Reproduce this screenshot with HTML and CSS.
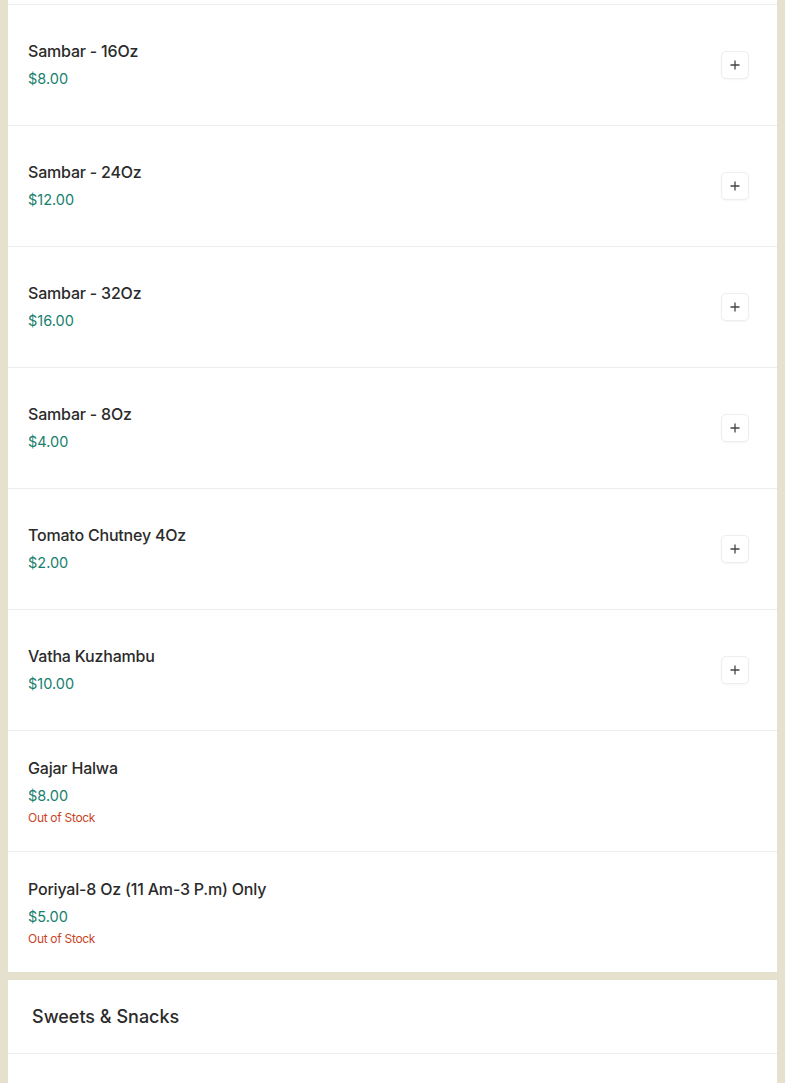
FILE: index.html
```html
<!DOCTYPE html>
<html lang="en">
<head>
  <meta charset="UTF-8">
  <meta name="viewport" content="width=device-width, initial-scale=1.0">
  <title>Menu</title>
  <link rel="stylesheet" href="styles.css">
</head>
<body>

  <div class="menu">

    <!-- Curries & Sides -->
    <section class="panel">
      <div class="item-list">
        <div class="item">
          <div class="item-info">
            <div class="item-name">Sambar - 16Oz</div>
            <div class="item-price">$8.00</div>
          </div>
          <button class="add-btn" aria-label="Add">
            <svg width="12" height="12" viewBox="0 0 12 12"><path d="M6 1.5v9M1.5 6h9" stroke="#444" stroke-width="1.3"/></svg>
          </button>
        </div>

        <div class="item">
          <div class="item-info">
            <div class="item-name">Sambar - 24Oz</div>
            <div class="item-price">$12.00</div>
          </div>
          <button class="add-btn" aria-label="Add">
            <svg width="12" height="12" viewBox="0 0 12 12"><path d="M6 1.5v9M1.5 6h9" stroke="#444" stroke-width="1.3"/></svg>
          </button>
        </div>

        <div class="item">
          <div class="item-info">
            <div class="item-name">Sambar - 32Oz</div>
            <div class="item-price">$16.00</div>
          </div>
          <button class="add-btn" aria-label="Add">
            <svg width="12" height="12" viewBox="0 0 12 12"><path d="M6 1.5v9M1.5 6h9" stroke="#444" stroke-width="1.3"/></svg>
          </button>
        </div>

        <div class="item">
          <div class="item-info">
            <div class="item-name">Sambar - 8Oz</div>
            <div class="item-price">$4.00</div>
          </div>
          <button class="add-btn" aria-label="Add">
            <svg width="12" height="12" viewBox="0 0 12 12"><path d="M6 1.5v9M1.5 6h9" stroke="#444" stroke-width="1.3"/></svg>
          </button>
        </div>

        <div class="item">
          <div class="item-info">
            <div class="item-name">Tomato Chutney 4Oz</div>
            <div class="item-price">$2.00</div>
          </div>
          <button class="add-btn" aria-label="Add">
            <svg width="12" height="12" viewBox="0 0 12 12"><path d="M6 1.5v9M1.5 6h9" stroke="#444" stroke-width="1.3"/></svg>
          </button>
        </div>

        <div class="item">
          <div class="item-info">
            <div class="item-name">Vatha Kuzhambu</div>
            <div class="item-price">$10.00</div>
          </div>
          <button class="add-btn" aria-label="Add">
            <svg width="12" height="12" viewBox="0 0 12 12"><path d="M6 1.5v9M1.5 6h9" stroke="#444" stroke-width="1.3"/></svg>
          </button>
        </div>

        <div class="item">
          <div class="item-info">
            <div class="item-name">Gajar Halwa</div>
            <div class="item-price">$8.00</div>
            <div class="stock">Out of Stock</div>
          </div>
        </div>

        <div class="item">
          <div class="item-info">
            <div class="item-name">Poriyal-8 Oz (11 Am-3 P.m) Only</div>
            <div class="item-price">$5.00</div>
            <div class="stock">Out of Stock</div>
          </div>
        </div>
      </div>
    </section>

    <!-- Sweets & Snacks -->
    <section class="panel panel-next">
      <h2 class="panel-title">Sweets &amp; Snacks</h2>
      <div class="item-list"></div>
    </section>

  </div>

</body>
</html>
```

FILE: styles.css
```css
/* General Styles */
body {
  margin: 0;
  background-color: #e6e0cf;
  font-family: Inter, "Noto Sans", sans-serif;
  color: #2b2b2b;
}

.menu {
  padding: 0 8px;
  display: flex;
  flex-direction: column;
  gap: 8px;
}

/* Category Panel */
.panel {
  background-color: #fff;
}

.panel:first-child {
  padding-top: 4px;
}

.panel-next {
  min-height: 200px;
}

.panel-title {
  margin: 0;
  height: 74px;
  display: flex;
  align-items: center;
  padding: 0 0 0 24px;
  box-sizing: border-box;
  font-size: 18px;
  font-weight: 500;
  color: #2b2b2b;
  border-bottom: 1px solid #ececec;
}

/* Items */
.item {
  height: 120px;
  border-top: 1px solid #ececec;
  display: flex;
  align-items: center;
  justify-content: space-between;
  padding: 0 28px 0 20px;
}

.item-name {
  font-size: 16px;
  line-height: 22px;
  font-weight: 500;
  letter-spacing: -0.2px;
  color: #2b2b2b;
}

.item-price {
  margin-top: 5px;
  font-size: 14.5px;
  line-height: 24px;
  color: #17806d;
}

.stock {
  margin-top: 2px;
  font-size: 12px;
  line-height: 16px;
  color: #c9441f;
  letter-spacing: -0.3px;
}

/* Add Button */
.add-btn {
  width: 28px;
  height: 28px;
  padding: 0;
  border: 1px solid #eeeeee;
  border-radius: 5px;
  background-color: #fff;
  box-shadow: 0 1px 2px rgba(0, 0, 0, 0.04);
  display: flex;
  align-items: center;
  justify-content: center;
  cursor: pointer;
}
```
